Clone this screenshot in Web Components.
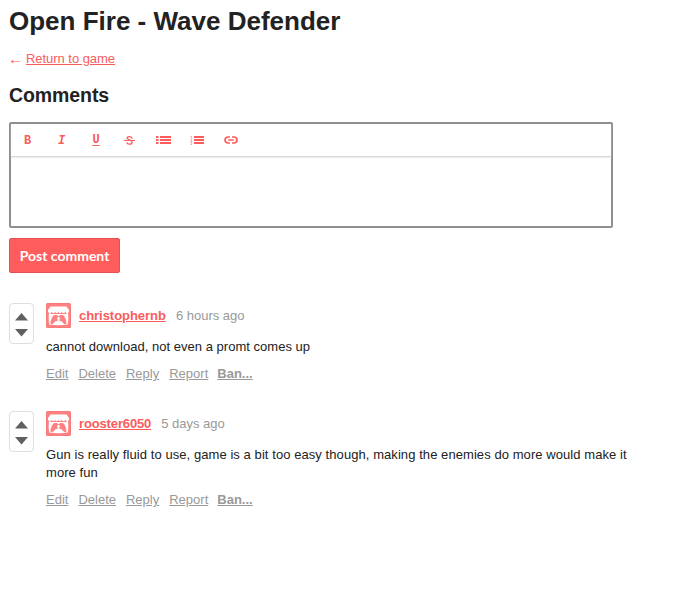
<!DOCTYPE html>
<html lang="en"><head><meta charset="utf-8"><title>Comments</title>
<style>body{margin:0;background:#fff;color:#222;font:13px/18px "Liberation Sans",Arial,sans-serif}</style></head>
<body><comments-page></comments-page>
<script>
const define=(name,html)=>customElements.define(name,class extends HTMLElement{
  constructor(){super();const t=document.createElement('template');t.innerHTML=html;this.attachShadow({mode:'open'}).append(t.content.cloneNode(true));}
});
define('vote-box',`<style>:host{display:flex;flex-direction:column;align-items:center;box-sizing:border-box;width:25px;height:41px;border:1px solid #dedede;border-radius:4px;padding-top:9px;gap:8px}svg{display:block;fill:#606060}</style>
<svg width="13" height="8"><path d="M0 7.500 6.500 0 13 7.500z"/></svg><svg width="13" height="8"><path d="M0 0h13L6.500 7.500z"/></svg>`);
define('user-avatar',`<style>:host{display:block;width:25px;height:25px}svg{display:block}</style>
<svg width="25" height="25" viewBox="0 0 25 25"><rect width="25" height="25" rx="1.5" fill="#f57c7c"/><rect x="1" y="1" width="23" height="23" rx="1" fill="#ff8080"/>
<path fill="#fff" d="M4.500 3.500h16L23 7v1.200c0 1-.8 1.800-1.800 1.800-.9 0-1.600-.6-1.800-1.300-.3.800-1 1.300-1.800 1.300s-1.500-.5-1.800-1.300c-.3.800-1 1.300-1.700 1.300s-1.400-.5-1.600-1.300c-.3.800-1 1.300-1.700 1.300S9.400 9.500 9.100 8.700C8.900 9.500 8.200 10 7.400 10s-1.500-.5-1.800-1.300C5.400 9.500 4.700 10 3.900 10 2.800 10 2 9.200 2 8.200V7z"/>
<path fill="#fff" d="M3 9.500h1.500v12H3.300C2.500 18 2.500 14 3 9.500zm17.500 0H22c.5 4.500.5 8.500-.3 12h-1.200z"/>
<path fill="#fff" d="M4 11h17v10.600c-5 .8-12 .8-17 0z"/>
<path fill="#ff8080" d="M8 12h2.700l1.800 1.200 1.800-1.200H17c2 1.500 3.600 6 3.500 8.500-.8 1.400-2.700.8-3.300-.4l-1.900-2h-5.600l-1.900 2c-.6 1.200-2.500 1.800-3.300.4C4.400 18 6 13.500 8 12z"/><path fill="#fff" d="M12.500 13.500l2 2.200h-1.100v2.600h-1.800v-2.600h-1.100z"/></svg>`);
define('action-links',`<style>:host{display:flex;gap:10px;color:#999;line-height:18px}a{text-decoration:underline}a:last-child{margin-left:-1px}b{font-weight:bold}</style><a>Edit</a><a>Delete</a><a>Reply</a><a>Report</a><a><b>Ban...</b></a>`);
define('comment-item',`<style>:host{display:flex;gap:12px;align-items:flex-start}.main{width:590px}header{display:flex;align-items:center;height:25px;gap:10px}.user{color:#fa5c5c;font-weight:bold;text-decoration:underline;margin-left:-2px;letter-spacing:var(--name-track,-.04px)}.time{color:#999}p{margin:10px 0 9px;line-height:18px;letter-spacing:var(--text-track,.025px)}</style>
<vote-box></vote-box><div class="main"><header><user-avatar></user-avatar><span class="user"><slot name="user"></slot></span><span class="time"><slot name="time"></slot></span></header><p><slot></slot></p><action-links></action-links></div>`);
define('editor-tools',`<style>:host{display:flex;height:32px;align-items:center;border-bottom:1px solid #d9d9d9;box-shadow:0 1px 1px #eee;color:#fa5c5c;font:bold 12px/14px "Liberation Mono",monospace}span{width:34px;display:flex;justify-content:center;align-items:center}svg{display:block;fill:#fa5c5c;overflow:visible;margin-right:1px}span:nth-child(-n+3){box-sizing:border-box;padding-right:1px;padding-top:1px}u{text-underline-offset:2px}span:nth-child(n+6) svg{margin-right:2px}</style>
<span>B</span><span><i>I</i></span><span><u>U</u></span>
<span><svg width="11" height="8"><path d="M8.200 2.600C7.900.2 3.200-.1 3.100 2.100 3.100 4.100 8.200 3.900 8.100 6.200 8 8.700 3.300 8.900 2.700 6.300" fill="none" stroke="#fa5c5c" stroke-width="1.300"/><path d="M0 4h5v1H0zm6 0h5v1H6z"/></svg></span>
<span><svg width="15" height="8"><path d="M0 0h2.500v2H0zm0 3h2.500v2H0zm0 3h2.500v2H0zM4 0h11v2H4zm0 3h11v2H4zm0 3h11v2H4z"/></svg></span>
<span><svg width="14" height="8"><path d="M4 0h10v2H4zm0 3h10v2H4zm0 3h10v2H4z"/><path d="M.5.5h1v2M.5 3.500h1v.7l-1 1h1.500M.5 6.500h1.300v2H.5" fill="none" stroke="#fa5c5c" stroke-width=".7" opacity=".75"/></svg></span>
<span><svg width="14" height="8"><path d="M6 1H4a3 3 0 0 0 0 6h2M8 1h2a3 3 0 0 1 0 6H8M4.200 4h5.600" fill="none" stroke="#fa5c5c" stroke-width="1.700"/></svg></span>`);
define('comment-editor',`<style>:host{display:block;box-sizing:border-box;width:604px;height:106px;border:2px solid #8f8f8f;border-radius:2px}</style><editor-tools></editor-tools>`);
define('post-button',`<style>:host{display:flex;box-sizing:border-box;width:111px;height:35px;align-items:center;justify-content:center;background:#ff5c5c;border:1px solid #e25252;border-radius:2px;color:#fff;font:bold 14px/20px Lato,sans-serif}</style><slot></slot>`);
define('comments-page',`<style>:host{display:block;padding:5px 9px}h1{font-size:26px;line-height:32px;margin:0 0 13px}h2{font-size:19.5px;line-height:24px;margin:15px 0 15px;letter-spacing:-.08px}.back{display:flex;height:18px;color:#fa5c5c}.back span{width:17px;font-family:"Liberation Serif",serif;font-size:15px;margin-left:-1px;margin-right:1px}.back a{text-decoration:underline;letter-spacing:-.04px}post-button{margin:10px 0 30px}comment-item+comment-item{margin-top:28px;--text-track:.07px;--name-track:-.14px}</style>
<h1>Open Fire - Wave Defender</h1><div class="back"><span>←</span><a>Return to game</a></div><h2>Comments</h2><comment-editor></comment-editor><post-button>Post comment</post-button>
<comment-item><span slot="user">christophernb</span><span slot="time">6 hours ago</span>cannot download, not even a promt comes up</comment-item>
<comment-item><span slot="user">rooster6050</span><span slot="time">5 days ago</span>Gun is really fluid to use, game is a bit too easy though, making the enemies do more would make it more fun</comment-item>`);
</script></body></html>
